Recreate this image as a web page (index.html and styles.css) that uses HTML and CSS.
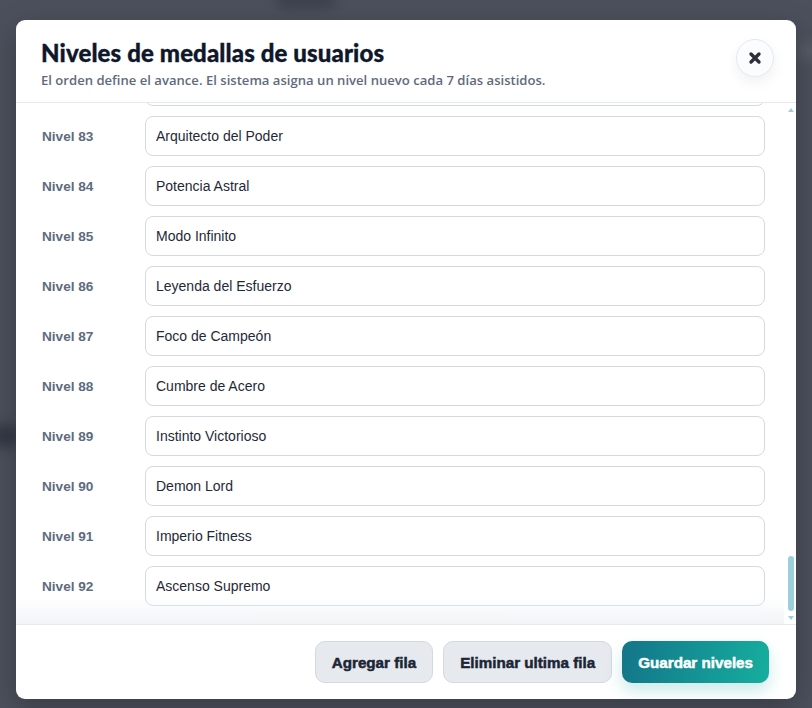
FILE: index.html
```html
<!DOCTYPE html>
<html lang="es">
<head>
<meta charset="utf-8">
<title>Niveles de medallas de usuarios</title>
<link rel="stylesheet" href="styles.css">
</head>
<body>
<div class="backdrop">
  <div class="blur blur-a"></div>
  <div class="blur blur-b"></div>
  <div class="blur blur-c"></div>
  <section class="modal">
    <header class="modal-header">
      <div class="heading">
        <h1 class="title">Niveles de medallas de usuarios</h1>
        <p class="subtitle">El orden define el avance. El sistema asigna un nivel nuevo cada 7 días asistidos.</p>
      </div>
      <button class="close" aria-label="Cerrar">
        <svg viewBox="0 0 14 14" width="14" height="14"><path d="M3 3 L11 11 M11 3 L3 11" stroke="#2b303b" stroke-width="3.4" stroke-linecap="round"/></svg>
      </button>
    </header>
    <div class="body-wrap">
      <div class="scroller">
        <div class="rows">
          <div class="row"><span class="label">Nivel 1</span><input class="field" value="Novato"></div>
          <div class="row"><span class="label">Nivel 2</span><input class="field" value="Aprendiz"></div>
          <div class="row"><span class="label">Nivel 3</span><input class="field" value="Iniciado"></div>
          <div class="row"><span class="label">Nivel 4</span><input class="field" value="Constante"></div>
          <div class="row"><span class="label">Nivel 5</span><input class="field" value="Decidido"></div>
          <div class="row"><span class="label">Nivel 6</span><input class="field" value="Enfocado"></div>
          <div class="row"><span class="label">Nivel 7</span><input class="field" value="Disciplinado"></div>
          <div class="row"><span class="label">Nivel 8</span><input class="field" value="Persistente"></div>
          <div class="row"><span class="label">Nivel 9</span><input class="field" value="Guerrero"></div>
          <div class="row"><span class="label">Nivel 10</span><input class="field" value="Atleta"></div>
          <div class="row"><span class="label">Nivel 11</span><input class="field" value="Resistente"></div>
          <div class="row"><span class="label">Nivel 12</span><input class="field" value="Imparable"></div>
          <div class="row"><span class="label">Nivel 13</span><input class="field" value="Veloz"></div>
          <div class="row"><span class="label">Nivel 14</span><input class="field" value="Fuerte"></div>
          <div class="row"><span class="label">Nivel 15</span><input class="field" value="Valiente"></div>
          <div class="row"><span class="label">Nivel 16</span><input class="field" value="Tenaz"></div>
          <div class="row"><span class="label">Nivel 17</span><input class="field" value="Incansable"></div>
          <div class="row"><span class="label">Nivel 18</span><input class="field" value="Gladiador"></div>
          <div class="row"><span class="label">Nivel 19</span><input class="field" value="Titán"></div>
          <div class="row"><span class="label">Nivel 20</span><input class="field" value="Campeón Local"></div>
          <div class="row"><span class="label">Nivel 21</span><input class="field" value="Fuego Interior"></div>
          <div class="row"><span class="label">Nivel 22</span><input class="field" value="Paso Firme"></div>
          <div class="row"><span class="label">Nivel 23</span><input class="field" value="Ritmo Constante"></div>
          <div class="row"><span class="label">Nivel 24</span><input class="field" value="Corazón de Hierro"></div>
          <div class="row"><span class="label">Nivel 25</span><input class="field" value="Mente Fuerte"></div>
          <div class="row"><span class="label">Nivel 26</span><input class="field" value="Energía Pura"></div>
          <div class="row"><span class="label">Nivel 27</span><input class="field" value="Voluntad de Acero"></div>
          <div class="row"><span class="label">Nivel 28</span><input class="field" value="Fuerza Viva"></div>
          <div class="row"><span class="label">Nivel 29</span><input class="field" value="Explorador"></div>
          <div class="row"><span class="label">Nivel 30</span><input class="field" value="Conquistador"></div>
          <div class="row"><span class="label">Nivel 31</span><input class="field" value="Centinela"></div>
          <div class="row"><span class="label">Nivel 32</span><input class="field" value="Vanguardia"></div>
          <div class="row"><span class="label">Nivel 33</span><input class="field" value="Halcón"></div>
          <div class="row"><span class="label">Nivel 34</span><input class="field" value="Lobo Solitario"></div>
          <div class="row"><span class="label">Nivel 35</span><input class="field" value="León Dorado"></div>
          <div class="row"><span class="label">Nivel 36</span><input class="field" value="Tormenta"></div>
          <div class="row"><span class="label">Nivel 37</span><input class="field" value="Relámpago"></div>
          <div class="row"><span class="label">Nivel 38</span><input class="field" value="Trueno"></div>
          <div class="row"><span class="label">Nivel 39</span><input class="field" value="Huracán"></div>
          <div class="row"><span class="label">Nivel 40</span><input class="field" value="Volcán"></div>
          <div class="row"><span class="label">Nivel 41</span><input class="field" value="Coloso"></div>
          <div class="row"><span class="label">Nivel 42</span><input class="field" value="Espartano"></div>
          <div class="row"><span class="label">Nivel 43</span><input class="field" value="Samurái"></div>
          <div class="row"><span class="label">Nivel 44</span><input class="field" value="Vikingo"></div>
          <div class="row"><span class="label">Nivel 45</span><input class="field" value="Caballero"></div>
          <div class="row"><span class="label">Nivel 46</span><input class="field" value="Paladín"></div>
          <div class="row"><span class="label">Nivel 47</span><input class="field" value="Guardián"></div>
          <div class="row"><span class="label">Nivel 48</span><input class="field" value="Maestro"></div>
          <div class="row"><span class="label">Nivel 49</span><input class="field" value="Gran Maestro"></div>
          <div class="row"><span class="label">Nivel 50</span><input class="field" value="Élite"></div>
          <div class="row"><span class="label">Nivel 51</span><input class="field" value="Élite Plus"></div>
          <div class="row"><span class="label">Nivel 52</span><input class="field" value="Héroe"></div>
          <div class="row"><span class="label">Nivel 53</span><input class="field" value="Súper Héroe"></div>
          <div class="row"><span class="label">Nivel 54</span><input class="field" value="Fénix"></div>
          <div class="row"><span class="label">Nivel 55</span><input class="field" value="Dragón"></div>
          <div class="row"><span class="label">Nivel 56</span><input class="field" value="Dragón de Fuego"></div>
          <div class="row"><span class="label">Nivel 57</span><input class="field" value="Estrella"></div>
          <div class="row"><span class="label">Nivel 58</span><input class="field" value="Estrella Fugaz"></div>
          <div class="row"><span class="label">Nivel 59</span><input class="field" value="Cometa"></div>
          <div class="row"><span class="label">Nivel 60</span><input class="field" value="Supernova"></div>
          <div class="row"><span class="label">Nivel 61</span><input class="field" value="Galaxia"></div>
          <div class="row"><span class="label">Nivel 62</span><input class="field" value="Nebulosa"></div>
          <div class="row"><span class="label">Nivel 63</span><input class="field" value="Órbita"></div>
          <div class="row"><span class="label">Nivel 64</span><input class="field" value="Cosmos"></div>
          <div class="row"><span class="label">Nivel 65</span><input class="field" value="Leyenda"></div>
          <div class="row"><span class="label">Nivel 66</span><input class="field" value="Mito"></div>
          <div class="row"><span class="label">Nivel 67</span><input class="field" value="Inmortal"></div>
          <div class="row"><span class="label">Nivel 68</span><input class="field" value="Semidiós"></div>
          <div class="row"><span class="label">Nivel 69</span><input class="field" value="Olímpico"></div>
          <div class="row"><span class="label">Nivel 70</span><input class="field" value="Hércules"></div>
          <div class="row"><span class="label">Nivel 71</span><input class="field" value="Atlas"></div>
          <div class="row"><span class="label">Nivel 72</span><input class="field" value="Zeus"></div>
          <div class="row"><span class="label">Nivel 73</span><input class="field" value="Rey del Gym"></div>
          <div class="row"><span class="label">Nivel 74</span><input class="field" value="Emperador"></div>
          <div class="row"><span class="label">Nivel 75</span><input class="field" value="Soberano"></div>
          <div class="row"><span class="label">Nivel 76</span><input class="field" value="Monarca"></div>
          <div class="row"><span class="label">Nivel 77</span><input class="field" value="Fuerza Suprema"></div>
          <div class="row"><span class="label">Nivel 78</span><input class="field" value="Alma de Titán"></div>
          <div class="row"><span class="label">Nivel 79</span><input class="field" value="Espíritu Indomable"></div>
          <div class="row"><span class="label">Nivel 80</span><input class="field" value="Señor del Hierro"></div>
          <div class="row"><span class="label">Nivel 81</span><input class="field" value="Cima Absoluta"></div>
          <div class="row"><span class="label">Nivel 82</span><input class="field" value="Forja Eterna"></div>
          <div class="row"><span class="label">Nivel 83</span><input class="field" value="Arquitecto del Poder"></div>
          <div class="row"><span class="label">Nivel 84</span><input class="field" value="Potencia Astral"></div>
          <div class="row"><span class="label">Nivel 85</span><input class="field" value="Modo Infinito"></div>
          <div class="row"><span class="label">Nivel 86</span><input class="field" value="Leyenda del Esfuerzo"></div>
          <div class="row"><span class="label">Nivel 87</span><input class="field" value="Foco de Campeón"></div>
          <div class="row"><span class="label">Nivel 88</span><input class="field" value="Cumbre de Acero"></div>
          <div class="row"><span class="label">Nivel 89</span><input class="field" value="Instinto Victorioso"></div>
          <div class="row"><span class="label">Nivel 90</span><input class="field" value="Demon Lord"></div>
          <div class="row"><span class="label">Nivel 91</span><input class="field" value="Imperio Fitness"></div>
          <div class="row"><span class="label">Nivel 92</span><input class="field" value="Ascenso Supremo"></div>
        </div>
      </div>
      <div class="track" aria-hidden="true">
        <span class="arrow arrow-up"></span>
        <span class="track-space"></span>
        <span class="thumb"></span>
        <span class="arrow arrow-down"></span>
      </div>
    </div>
    <footer class="modal-footer">
      <button class="btn btn-secondary">Agregar fila</button>
      <button class="btn btn-secondary">Eliminar ultima fila</button>
      <button class="btn btn-primary">Guardar niveles</button>
    </footer>
  </section>
</div>
</body>
</html>
```

FILE: styles.css
```css
* { box-sizing: border-box; }
html, body { margin: 0; padding: 0; }
body {
  width: 812px;
  height: 708px;
  overflow: hidden;
  background: #4b4f5b;
  font-family: "Liberation Sans", Arial, sans-serif;
}
.backdrop {
  position: relative;
  width: 812px;
  height: 708px;
  padding: 20px 16px 9px 16px;
  background: #4c505c;
}
.blur {
  position: absolute;
  border-radius: 8px;
  filter: blur(6px);
}
.blur-a { left: 276px; top: -6px; width: 60px; height: 14px; background: #3c404b; }
.blur-b { left: -10px; top: 425px; width: 30px; height: 22px; background: #343845; }
.blur-c { left: 796px; top: 42px; width: 30px; height: 18px; background: #575b66; }

.modal {
  position: relative;
  width: 780px;
  height: 679px;
  background: #ffffff;
  border-radius: 9px;
  display: flex;
  flex-direction: column;
  overflow: hidden;
  box-shadow: 0 10px 30px rgba(0,0,0,0.25);
}
.modal-header {
  height: 83px;
  flex: none;
  display: flex;
  justify-content: space-between;
  align-items: flex-start;
  padding: 19px 22px 0 25px;
  border-bottom: 1px solid #e6e9ee;
}
.title {
  margin: 0;
  font-family: Lato, "Noto Sans", sans-serif;
  font-weight: 900;
  font-size: 24px;
  line-height: 28px;
  letter-spacing: 0.12px;
  color: #0f172a;
  -webkit-text-stroke: 0.35px #0f172a;
}
.subtitle {
  margin: 4px 0 0 0;
  font-family: "Open Sans", "Noto Sans", sans-serif;
  font-weight: 600;
  font-size: 13.1px;
  line-height: 18px;
  color: #5f6b7c;
}
.close {
  width: 38px;
  height: 38px;
  margin-top: 0;
  border-radius: 50%;
  border: 1px solid #e4e8ee;
  background: #fbfcfd;
  display: flex;
  align-items: center;
  justify-content: center;
  padding: 0;
  box-shadow: 0 6px 14px rgba(15,23,42,0.06);
}
.body-wrap {
  position: relative;
  flex: 1;
  min-height: 0;
  display: flex;
}
.body-wrap::after {
  content: "";
  position: absolute;
  left: 0;
  right: 12px;
  bottom: 0;
  height: 26px;
  background: linear-gradient(to bottom, rgba(255,255,255,0), rgba(240,242,245,0.85));
  pointer-events: none;
}
.scroller {
  flex: 1;
  height: 100%;
  overflow-y: scroll;
  display: flex;
  flex-direction: column-reverse;
  scrollbar-width: none;
}
.scroller::-webkit-scrollbar { display: none; }
.rows {
  display: flex;
  flex-direction: column;
  gap: 10px;
  padding: 12px 21px 18px 26px;
}
.row {
  display: flex;
  align-items: center;
  height: 40px;
}
.label {
  width: 103px;
  flex: none;
  font-weight: 700;
  font-size: 13.6px;
  color: #5d6b7e;
}
.field {
  flex: 1;
  height: 40px;
  border: 1px solid #d3d9e1;
  border-radius: 8px;
  padding: 0 10px;
  font-family: "Liberation Sans", Arial, sans-serif;
  font-size: 14px;
  color: #1f2937;
  background: #ffffff;
  outline: none;
}
.track {
  width: 10px;
  flex: none;
  display: flex;
  flex-direction: column;
  align-items: center;
  padding: 5px 0 4px 0;
}
.arrow {
  width: 0;
  height: 0;
  border-left: 3.5px solid transparent;
  border-right: 3.5px solid transparent;
}
.arrow-up { border-bottom: 4px solid #9ccfdc; }
.arrow-down { border-top: 4px solid #9ccfdc; }
.track-space { flex: 1; }
.thumb {
  width: 6px;
  height: 55px;
  border-radius: 3px;
  background: #9ccfdc;
  margin-bottom: 5px;
}
.modal-footer {
  height: 75px;
  flex: none;
  border-top: 1px solid #e6e9ee;
  display: flex;
  justify-content: flex-end;
  align-items: flex-start;
  gap: 10px;
  padding: 16px 27px 0 0;
}
.btn {
  height: 42px;
  border-radius: 10px;
  font-family: "Liberation Sans", Arial, sans-serif;
  font-weight: 700;
  font-size: 15.2px;
  -webkit-text-stroke: 0.5px currentColor;
  padding: 0 16px;
  cursor: pointer;
}
.btn-secondary {
  background: #e6e9ee;
  border: 1px solid #d4d9e0;
  color: #1b2536;
}
.btn-primary {
  background: linear-gradient(100deg, #137589 0%, #16ae9e 100%);
  border: none;
  color: #ffffff;
  box-shadow: 0 8px 16px rgba(20,160,160,0.22);
}
```
